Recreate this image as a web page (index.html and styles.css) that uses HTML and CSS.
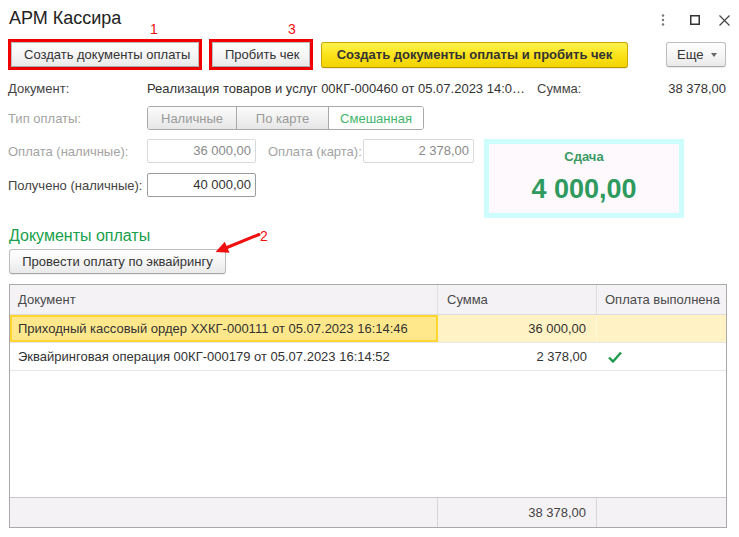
FILE: index.html
```html
<!DOCTYPE html>
<html lang="ru">
<head>
<meta charset="utf-8">
<title>АРМ Кассира</title>
<link rel="stylesheet" href="styles.css">
</head>
<body>
<div class="app">
  <header class="titlebar">
    <h1 class="title">АРМ Кассира</h1>
    <div class="win-ctrls">
      <svg class="ic-dots" width="4" height="12" viewBox="0 0 4 12"><circle cx="2" cy="1.5" r="1.2" fill="#777"/><circle cx="2" cy="6" r="1.2" fill="#777"/><circle cx="2" cy="10.5" r="1.2" fill="#777"/></svg>
      <svg class="ic-max" width="10" height="10" viewBox="0 0 10 10"><rect x="0.75" y="0.75" width="8.5" height="8.5" fill="none" stroke="#333" stroke-width="1.5"/></svg>
      <svg class="ic-close" width="11" height="11" viewBox="0 0 11 11"><path d="M0.5 0.5 L10.5 10.5 M10.5 0.5 L0.5 10.5" stroke="#444" stroke-width="1.2"/></svg>
    </div>
  </header>

  <div class="toolbar">
    <div class="mark mark-1"><button class="btn">Создать документы оплаты</button></div>
    <div class="mark mark-2"><button class="btn">Пробить чек</button></div>
    <button class="btn btn-yellow">Создать документы оплаты и пробить чек</button>
    <button class="btn btn-more">Еще <span class="caret"></span></button>
  </div>

  <div class="doc-row">
    <span class="lbl">Документ:</span>
    <span class="doc-value">Реализация товаров и услуг 00КГ-000460 от 05.07.2023 14:0…</span>
    <span class="sum-lbl">Сумма:</span>
    <span class="sum-val">38 378,00</span>
  </div>

  <div class="type-row">
    <span class="lbl lbl-dis">Тип оплаты:</span>
    <div class="seg">
      <span class="seg-item seg-1">Наличные</span>
      <span class="seg-item seg-2">По карте</span>
      <span class="seg-item seg-3 seg-on">Смешанная</span>
    </div>
  </div>

  <div class="pay-area">
    <div class="pay-left">
      <div class="pay-row">
        <span class="lbl lbl-dis">Оплата (наличные):</span>
        <span class="field field-dis f-cash">36 000,00</span>
        <span class="lbl2 lbl-dis">Оплата (карта):</span>
        <span class="field field-dis f-card">2 378,00</span>
      </div>
      <div class="pay-row">
        <span class="lbl">Получено (наличные):</span>
        <span class="field f-cash">40 000,00</span>
      </div>
    </div>
    <div class="change-box">
      <div class="change-lbl">Сдача</div>
      <div class="change-val">4 000,00</div>
    </div>
  </div>

  <h2 class="section">Документы оплаты</h2>
  <button class="btn btn-acq">Провести оплату по эквайрингу</button>

  <div class="grid">
    <div class="g-head">
      <div class="cell">Документ</div>
      <div class="cell">Сумма</div>
      <div class="cell">Оплата выполнена</div>
    </div>
    <div class="g-body">
      <div class="g-row g-row-sel">
        <div class="cell cell-sel">Приходный кассовый ордер ХХКГ-000111 от 05.07.2023 16:14:46</div>
        <div class="cell num">36 000,00</div>
        <div class="cell"></div>
      </div>
      <div class="g-row">
        <div class="cell">Эквайринговая операция 00КГ-000179 от 05.07.2023 16:14:52</div>
        <div class="cell num">2 378,00</div>
        <div class="cell chk"><svg width="14" height="12" viewBox="0 0 14 12"><path d="M1 6.5 L5 10.5 L13 1.5" fill="none" stroke="#1f9a4c" stroke-width="2.4"/></svg></div>
      </div>
    </div>
    <div class="g-foot">
      <div class="cell"></div>
      <div class="cell num">38 378,00</div>
      <div class="cell"></div>
    </div>
  </div>

  <span class="anno anno-1">1</span>
  <span class="anno anno-3">3</span>
  <span class="anno anno-2">2</span>
  <svg class="anno-arrow" width="60" height="35" viewBox="0 0 60 35"><path d="M54 9.5 L22 22.5" stroke="#f01010" stroke-width="3" stroke-linecap="round"/><path d="M10.5 27 L24.5 27.8 L19.8 16.8 Z" fill="#f01010"/></svg>
</div>
</body>
</html>
```

FILE: styles.css
```css
* { box-sizing: border-box; }
body {
  margin: 0;
  font: 13px "Liberation Sans", Arial, sans-serif;
  color: #333;
  background: #fff;
}
.app {
  position: relative;
  padding: 0 13px 0 8px;
  height: 537px;
}
.titlebar {
  height: 39px;
  display: flex;
  justify-content: space-between;
  align-items: flex-start;
}
.title {
  margin: 8px 0 0 1px;
  font-size: 18px;
  line-height: 21px;
  font-weight: normal;
  color: #222;
}
.win-ctrls {
  display: flex;
  align-items: center;
  margin-top: 14px;
  margin-right: -4px;
}
.ic-dots { margin-right: 25px; }
.ic-max { margin-right: 19px; }

.toolbar {
  display: flex;
  align-items: center;
  height: 31px;
}
.mark {
  border: 3px solid #f20000;
  display: flex;
}
.mark-2 { margin-left: 7px; }
.btn {
  font: 13px "Liberation Sans", Arial, sans-serif;
  color: #333;
  height: 25px;
  padding: 0 12px;
  border: 1px solid #bdbdbd;
  border-bottom-color: #a8a8a8;
  border-radius: 3px;
  background: linear-gradient(#ffffff, #f6f6f6 50%, #e9e9e9);
  box-shadow: 0 1px 1px rgba(0,0,0,0.08);
  white-space: nowrap;
}
.mark .btn { border-radius: 1px; }
.mark-1 .btn { width: 188px; }
.mark-2 .btn { width: 98px; }
.btn-yellow {
  margin-left: 8px;
  width: 307px;
  height: 26px;
  font-weight: bold;
  color: #333;
  background: linear-gradient(#fff34d, #fbe21a 50%, #f2d300);
  border-color: #c9a800;
  border-bottom-color: #b39600;
}
.btn-more {
  margin-left: auto;
  width: 60px;
  padding: 0 8px 0 10px;
  display: flex;
  align-items: center;
  justify-content: space-between;
}
.caret {
  width: 0; height: 0;
  border-left: 3.5px solid transparent;
  border-right: 3.5px solid transparent;
  border-top: 4px solid #666;
}

.doc-row {
  display: flex;
  margin-top: 10px;
  height: 18px;
  line-height: 18px;
}
.lbl { width: 139px; flex: none; color: #444; }
.lbl-dis { color: #a4a4a4; }
.doc-value {
  width: 390px;
  flex: none;
  white-space: nowrap;
  color: #333;
}
.sum-lbl { color: #444; }
.sum-val { flex: 1; text-align: right; }

.type-row {
  display: flex;
  align-items: center;
  margin-top: 8px;
}
.seg {
  display: flex;
  height: 24px;
  border: 1px solid #a9a9a9;
  border-radius: 3px;
  overflow: hidden;
}
.seg-item {
  display: flex;
  align-items: center;
  justify-content: center;
  color: #9a9a9a;
  background: linear-gradient(#fbfbfb, #f1f1f1 50%, #e6e6e6);
  border-right: 1px solid #a9a9a9;
}
.seg-1 { width: 89px; }
.seg-2 { width: 92px; }
.seg-3 { width: 94px; border-right: 0; }
.seg-on { background: #fff; color: #3fb56c; }

.pay-area {
  display: flex;
  align-items: flex-start;
  margin-top: 9px;
}
.pay-left {
  display: flex;
  flex-direction: column;
  gap: 10px;
}
.pay-row {
  display: flex;
  align-items: center;
  height: 24px;
}
.field {
  height: 24px;
  line-height: 22px;
  padding-right: 4px;
  text-align: right;
  border: 1px solid #9c9c9c;
  border-radius: 2px;
  color: #333;
}
.field-dis { border-color: #d9d9d9; color: #8a8a8a; }
.f-cash { width: 109px; }
.f-card { width: 111px; }
.lbl2 { width: 95px; margin-left: 12px; }

.change-box {
  margin-left: 10px;
  width: 200px;
  height: 79px;
  border: 5px solid #cdfdfd;
  background: #fdf9fd;
  text-align: center;
  padding-top: 5px;
}
.change-lbl {
  font-weight: bold;
  font-size: 13px;
  line-height: 16px;
  color: #3a9a62;
}
.change-val {
  margin-top: 9px;
  font-weight: bold;
  font-size: 27px;
  line-height: 31px;
  color: #2e9a5d;
}

.section {
  margin: 8px 0 0 1px;
  font-size: 16px;
  line-height: 19px;
  font-weight: normal;
  color: #17a04a;
}
.btn-acq {
  display: block;
  margin: 4px 0 0 1px;
  width: 217px;
}

.grid {
  margin: 10px 0 0 1px;
  width: 718px;
  height: 244px;
  border: 1px solid #a9a9a9;
  display: flex;
  flex-direction: column;
}
.g-head, .g-row, .g-foot {
  display: grid;
  grid-template-columns: 428px 159px 1fr;
}
.g-head {
  height: 30px;
  background: #f5f2f6;
  border-bottom: 1px solid #dcdcdc;
  color: #4a4a4a;
}
.g-head .cell { border-right: 1px solid #dedede; padding-left: 8px; }
.g-head .cell:last-child { border-right: 0; }
.cell {
  display: flex;
  align-items: center;
  padding-left: 8px;
  white-space: nowrap;
  overflow: hidden;
}
.g-head .cell:nth-child(2) { padding-left: 9px; }
.g-body { flex: 1; }
.g-row {
  height: 28px;
  border-bottom: 1px solid #e6e6e6;
}
.g-row-sel { background: #fff2c4; }
.g-row-sel .cell:nth-child(2) { border-right: 1px solid #fff8e0; }
.cell-sel {
  background: #ffe88c;
  border: 2px solid #ffd530;
  padding-left: 6px;
}
.num { justify-content: flex-end; padding-right: 10px; }
.chk { padding-left: 11px; }
.g-foot {
  height: 30px;
  background: #f5f2f6;
  border-top: 1px solid #c9c9c9;
}
.g-foot .cell { border-right: 1px solid #d6d6d6; color: #444; }
.g-foot .cell:last-child { border-right: 0; }

.anno {
  position: absolute;
  color: #f01010;
  font-size: 14px;
  line-height: 16px;
}
.anno-1 { left: 150px; top: 21px; }
.anno-3 { left: 288px; top: 21px; }
.anno-2 { left: 260px; top: 228px; }
.anno-arrow { position: absolute; left: 205px; top: 225px; }
```
